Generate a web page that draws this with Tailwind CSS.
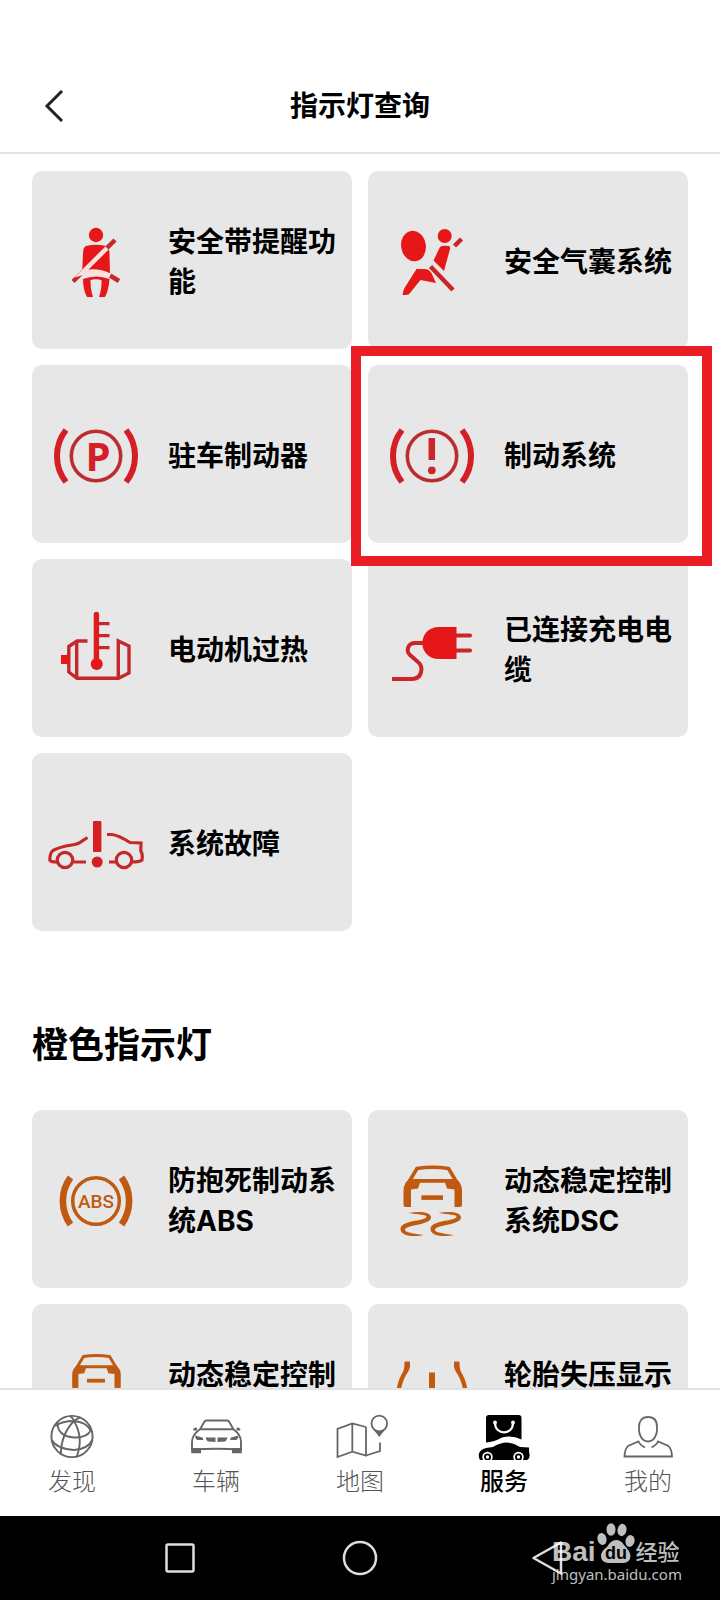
<!DOCTYPE html>
<html lang="zh-CN">
  <head>
    <meta charset="UTF-8" />
    <meta name="viewport" content="width=device-width, initial-scale=1" />
    <title>指示灯查询</title>
    <script src="https://cdn.jsdelivr.net/npm/@tailwindcss/browser@4"></script>
  </head>
  <body
    class="h-screen flex flex-col bg-white text-black font-['Inter','Noto_Sans_CJK_SC',sans-serif]"
  >
    <header class="shrink-0 pt-[60px] border-b-2 border-[#e4e4e4]">
      <div class="relative h-[92px] flex items-center justify-center">
        <button type="button" aria-label="返回" class="absolute left-8 p-2">
          <svg class="w-8 h-8" viewBox="0 0 32 32" fill="none" stroke="#222" stroke-width="3">
            <path d="M22 1 7 16l15 15" />
          </svg>
        </button>
        <h1 class="text-[28px] leading-10 font-bold">指示灯查询</h1>
      </div>
    </header>

    <main class="flex-1 min-h-0 overflow-hidden px-8 pt-[17px]">
      <!-- Red warning lights -->
      <section class="grid grid-cols-2 gap-4 text-[#e61718]">
        <button type="button" class="h-[178px] bg-[#e7e7e7] rounded-[10px] px-4 flex items-center gap-6 text-left">
          <svg class="w-24 h-24 shrink-0" viewBox="0 0 96 96" fill="none" stroke="currentColor">
            <g fill="currentColor" stroke="none">
              <circle cx="48" cy="23" r="7.2" />
              <path d="M38 34Q48 31.500 58 34Q61.500 35 61.500 42L62 62Q48 55 34 62L35 42Q35 35 38 34Z" />
              <path d="M35 67Q48 62 61.500 67Q60.500 79 57 85H51Q54 76 53.500 68Q48 66.500 42.500 68Q42.500 78 45 85H39Q35 78 35 67Z" />
            </g>
            <path d="M67 28 25 69.500M71 69 62 63.500" stroke="#c5292b" stroke-width="4.500" />
            <path d="M59 36 34 61Q48 57 62 63.500" stroke="#fce0dd" stroke-width="4.500" />
          </svg>
          <span class="pt-1 text-[28px] leading-10 font-bold text-black">安全带提醒功能</span>
        </button>

        <button type="button" class="h-[178px] bg-[#e7e7e7] rounded-[10px] px-4 flex items-center gap-6 text-left">
          <svg class="w-24 h-24 shrink-0" viewBox="0 0 96 96" fill="currentColor">
            <ellipse cx="29.500" cy="34" rx="12.300" ry="15.300" transform="rotate(-10 29.500 34)" />
            <circle cx="60.700" cy="24" r="7" />
            <path d="M56 35Q58 33 65 34Q66.500 34.500 66 37L60 59 49.500 48.500Z" />
            <path d="M32.500 57H40Q45 57 47 60L52 71 36.500 68 26 81Q25 83 22 83H18.500Q19 79 20.500 76Z" />
            <path d="M46 54 69.500 78.500" fill="none" stroke="#e7e7e7" stroke-width="7.500" />
            <path d="M77.500 27 70.500 34M46.500 54.500 69 78" fill="none" stroke="#cb2427" stroke-width="4.500" />
          </svg>
          <span class="pt-1 text-[28px] leading-10 font-bold text-black">安全气囊系统</span>
        </button>

        <button type="button" class="h-[178px] bg-[#e7e7e7] rounded-[10px] px-4 flex items-center gap-6 text-left">
          <svg class="w-24 h-24 shrink-0" viewBox="0 0 96 96" fill="none">
            <circle cx="48" cy="50" r="24.700" stroke="#bd2c2f" stroke-width="3.600" />
            <path d="M18 24A42 42 0 0 0 18 76M78 24A42 42 0 0 1 78 76" stroke="#d42024" stroke-width="6" />
            <text x="50" y="65" text-anchor="middle" fill="#d42024" class="font-['Open_Sans','Noto_Sans',sans-serif] text-[40px] font-bold">P</text>
          </svg>
          <span class="pt-1 text-[28px] leading-10 font-bold text-black">驻车制动器</span>
        </button>

        <div class="relative flex">
          <button type="button" class="flex-1 h-[178px] bg-[#e7e7e7] rounded-[10px] px-4 flex items-center gap-6 text-left">
            <svg class="w-24 h-24 shrink-0" viewBox="0 0 96 96" fill="none">
              <circle cx="48" cy="50" r="24.700" stroke="#bd2c2f" stroke-width="3.600" />
              <path d="M18 24A42 42 0 0 0 18 76M78 24A42 42 0 0 1 78 76" stroke="#d42024" stroke-width="6" />
              <path d="M47.800 32V54" stroke="#c9272a" stroke-width="6.500" />
              <circle cx="47.800" cy="64.300" r="3.900" fill="#c9272a" />
            </svg>
            <span class="pt-1 text-[28px] leading-10 font-bold text-black">制动系统</span>
          </button>
          <!-- Highlight frame around this card -->
          <div class="absolute z-10 -left-[17px] -right-6 -top-[19px] -bottom-[23px] border-10 border-[#ea1c24] pointer-events-none"></div>
        </div>

        <button type="button" class="h-[178px] bg-[#e7e7e7] rounded-[10px] px-4 flex items-center gap-6 text-left">
          <svg class="w-24 h-24 shrink-0" viewBox="0 0 96 96" fill="none" stroke="#c5282b" stroke-width="3.400">
            <path d="M39.500 41H29L20.800 46.500V72L29 78.300H70.500L81 73V46L70.300 41V78M28.700 42V78" />
            <path d="M48 23.700H61.500M48 35.700H61.500M48 47.700H61.500" stroke-width="3.200" />
            <path d="M48.400 14.500V62" stroke="#de1b1e" stroke-width="5.400" stroke-linecap="round" />
            <circle cx="48.700" cy="64" r="6" fill="#e61718" stroke="none" />
            <path d="M13 55H21V64H13Z" fill="#e61718" stroke="none" />
          </svg>
          <span class="pt-1 text-[28px] leading-10 font-bold text-black">电动机过热</span>
        </button>

        <button type="button" class="h-[178px] bg-[#e7e7e7] rounded-[10px] px-4 flex items-center gap-6 text-left">
          <svg class="w-24 h-24 shrink-0" viewBox="0 0 96 96" fill="none" stroke="#cb2528" stroke-width="4">
            <path d="M72.500 27V59H55C44 59 38.300 51 38.300 43S44 27 55 27Z" fill="#e61718" stroke="none" />
            <path d="M72 35.600H86M72 50.600H86" stroke-linecap="round" />
            <path d="M39 43H31C24 43 21.500 51 26 55L34 62C40 67 38 79 28 79H8" />
          </svg>
          <span class="pt-1 text-[28px] leading-10 font-bold text-black">已连接充电电缆</span>
        </button>

        <button type="button" class="h-[178px] bg-[#e7e7e7] rounded-[10px] px-4 flex items-center gap-6 text-left">
          <svg class="w-24 h-24 shrink-0" viewBox="0 0 96 96" fill="none" stroke="#c5282b" stroke-width="3.200">
            <path d="M39.500 43.500 31 49Q28 50.500 24 51 11 53 5 56.500 1.800 59 1.800 66 2 68 9 68M26 68H38M61 68H67.500" />
            <path d="M59 40.500H64Q71 41.500 82 48.500L93 49 92.800 57Q95 60 94 66 92 68 84 68" />
            <circle cx="17" cy="66" r="7.700" />
            <circle cx="76" cy="66" r="7.700" />
            <rect x="45" y="27" width="8.400" height="31" rx="1" fill="#d61f22" stroke="none" />
            <circle cx="49.200" cy="68" r="5.500" fill="#d61f22" stroke="none" />
          </svg>
          <span class="pt-1 text-[28px] leading-10 font-bold text-black">系统故障</span>
        </button>
      </section>

      <!-- Orange warning lights -->
      <h2 class="mt-[90px] mb-[41px] text-4xl leading-12 font-bold">橙色指示灯</h2>
      <section class="grid grid-cols-2 gap-4 text-[#c05a10]">
        <button type="button" class="h-[178px] bg-[#e7e7e7] rounded-[10px] px-4 flex items-center gap-6 text-left">
          <svg class="w-24 h-24 shrink-0" viewBox="0 0 96 96" fill="none" stroke="currentColor">
            <circle cx="48" cy="50" r="23.300" stroke-width="3.500" />
            <path d="M22.500 26.500A40 40 0 0 0 22.500 73.500M73.500 26.500A40 40 0 0 1 73.500 73.500" stroke-width="6.600" />
            <text x="48" y="57" text-anchor="middle" fill="currentColor" stroke="none" class="font-['Roboto',sans-serif] text-[19px] font-medium">ABS</text>
          </svg>
          <span class="pt-1 text-[28px] leading-10 font-bold text-black">防抱死制动系统ABS</span>
        </button>

        <button type="button" class="h-[178px] bg-[#e7e7e7] rounded-[10px] px-4 flex items-center gap-6 text-left">
          <svg class="w-24 h-24 shrink-0" viewBox="0 0 96 96" fill="currentColor">
            <g id="dsc">
              <path d="M25.500 30 33 17.500Q48.500 15 64.500 17.500L72 30" fill="none" stroke="currentColor" stroke-width="3.600" />
              <path d="M25 28H72.500Q78 33 78 39V54Q78 56 76 56H70.500V38.500L63 37.500 61 31.700H36L34 37.500 27 38.500V56H21.500Q19.500 56 19.500 54V39Q19.500 33 25 28Z" />
              <path d="M37.300 44.300H59V48.900H37.300Z" />
              <path id="skid" d="M24.500 62C34 60 47 60.500 47 66.500C47 74 23 73.500 21 78.500C20 81.500 30 82.500 39.500 84C31 86 16.500 85.500 16.500 78C16.700 69 40 70.500 42.500 66C43.500 63.500 34 63.500 24.500 62Z" />
              <use href="#skid" x="30" />
            </g>
          </svg>
          <span class="pt-1 text-[28px] leading-10 font-bold text-black">动态稳定控制系统DSC</span>
        </button>

        <button type="button" class="h-[178px] bg-[#e7e7e7] rounded-[10px] px-4 flex items-center gap-6 text-left">
          <svg class="w-24 h-24 shrink-0" viewBox="0 0 96 96" fill="currentColor">
            <use href="#dsc" transform="translate(8 -3) scale(.83)" />
          </svg>
          <span class="pt-1 text-[28px] leading-10 font-bold text-black">动态稳定控制系统DSC</span>
        </button>

        <button type="button" class="h-[178px] bg-[#e7e7e7] rounded-[10px] px-4 flex items-center gap-6 text-left">
          <svg class="w-24 h-24 shrink-0" viewBox="0 0 96 96" fill="currentColor">
            <path d="M20.500 16.500H26V22.500Q25 26 22 30 18.500 36 17 44L16 54H12L13 42Q15 33 19 27 20.500 24 20.500 16.500ZM75.500 16.500H70V22.500Q71 26 74 30 77.500 36 79 44L80 54H84L83 42Q81 33 77 27 75.500 24 75.500 16.500Z" />
            <path d="M45 27.500H51V56H45Z" />
          </svg>
          <span class="pt-1 text-[28px] leading-10 font-bold text-black">轮胎失压显示系统</span>
        </button>
      </section>
    </main>

    <nav class="shrink-0 h-32 border-t-2 border-[#e2e2e2] bg-white grid grid-cols-5 text-2xl leading-8 font-light text-[#555]">
      <a href="#" class="pt-5 flex flex-col items-center">
        <svg class="w-14 h-14" viewBox="0 0 56 56" fill="none" stroke="#666" stroke-width="1.900">
          <circle cx="28" cy="26.500" r="20.600" />
          <path d="M30 11Q17 24 16.800 45M30 11Q40 28 32.700 46.500M30 11Q29 8 26 6M30 11Q34 8 36 7.500" />
          <path d="M14 12.500C11 31 44 31 46.500 20Q42 12 30 11 18 11 11 16M7.700 30Q13 39 30 40 44 39 48.300 30" />
        </svg>
        <span>发现</span>
      </a>
      <a href="#" class="pt-5 flex flex-col items-center">
        <svg class="w-14 h-14 text-[#666]" viewBox="0 0 56 56" fill="none" stroke="currentColor" stroke-width="1.900">
          <path d="M12 19.300 16.500 11.500Q17.500 10.500 19 10.500H38.500Q40 10.500 41 11.500L45.500 19.300ZM12 19.300Q4 25 4 32V39.500Q28.500 38 53 39.500V32Q53 25 45.500 19.300" />
          <g fill="currentColor" stroke="none">
            <path d="M3.200 38H13V43.300H3.200ZM44 38H53.800V43.300H44ZM5 19Q7 16.500 9 18V20.500H5.500ZM52.500 19Q50.500 16.500 48.500 18V20.500H52Z" />
            <path d="M7 25.500 14.500 27.500 15.500 30H9Q7 29 7 25.500ZM50.500 25.500 43 27.500 42 30H48.500Q50.500 29 50.500 25.500ZM17.500 27.500H27.500V32L20 31.500Q18 30 17.500 27.500ZM39.500 27.500H29.500V32L37 31.500Q39 30 39.500 27.500Z" />
          </g>
        </svg>
        <span>车辆</span>
      </a>
      <a href="#" class="pt-5 flex flex-col items-center">
        <svg class="w-14 h-14 text-[#666]" viewBox="0 0 56 56" fill="none" stroke="currentColor" stroke-width="1.800">
          <path d="M34 17 20.300 13.500 5.500 19V47L20.300 41.700 34 45.500V17M20.300 13.500V41.700M34 45.500 48 41V32.500" />
          <circle cx="47.300" cy="13.500" r="7.800" />
          <path d="M41 19Q47.500 23 53.500 19L47.300 27Z" fill="currentColor" stroke="none" />
        </svg>
        <span>地图</span>
      </a>
      <a href="#" aria-current="page" class="pt-5 flex flex-col items-center font-medium text-black">
        <svg class="w-14 h-14" viewBox="0 0 56 56" fill="none">
          <path d="M13 5H42.500Q45.500 5 45.500 8V29.500Q36 24.500 26 27.500 18 32 10 32.500V8Q10 5 13 5Z" fill="currentColor" />
          <path d="M19 13C19 25.500 37 25.500 37 13" stroke="white" stroke-width="2.200" />
          <circle cx="19" cy="12.500" r="1.900" fill="white" />
          <circle cx="37" cy="12.500" r="1.900" fill="white" />
          <path d="M4 50Q2.200 47 3 43.500 4 39.500 10 38L17 37Q24 32.500 31 32.500 38 33 44 37L53 37.500V42Q54.500 46 52.500 49L51 50Z" fill="currentColor" />
          <circle cx="11.500" cy="47" r="4.400" stroke="white" stroke-width="1.700" />
          <circle cx="42.500" cy="47" r="4.400" stroke="white" stroke-width="1.700" />
          <circle cx="11.500" cy="47" r="1.700" fill="white" />
          <circle cx="42.500" cy="47" r="1.700" fill="white" />
        </svg>
        <span>服务</span>
      </a>
      <a href="#" class="pt-5 flex flex-col items-center">
        <svg class="w-14 h-14 text-[#666]" viewBox="0 0 56 56" fill="none" stroke="currentColor" stroke-width="1.800">
          <path d="M28 7C34 7 37 11 37 17V21Q36 27 32.500 30 28 33 23.500 30 20 27 19 21V17C19 11 22 7 28 7Z" />
          <path d="M25 37.500Q20 35 18.500 31.500L8 36Q4.500 40 4.500 46.500H52Q52 40 48.500 36L38 31.500Q36.500 35 31.500 37.500" />
        </svg>
        <span>我的</span>
      </a>
    </nav>

    <!-- System buttons -->
    <footer class="relative shrink-0 h-[84px] bg-black flex items-center justify-center gap-33 text-[#dedede]">
      <button type="button" aria-label="最近任务">
        <svg class="w-12 h-12" viewBox="0 0 48 48" fill="none" stroke="currentColor" stroke-width="2.500">
          <rect x="10.500" y="10.500" width="27" height="27" rx="1.500" />
        </svg>
      </button>
      <button type="button" aria-label="主页">
        <svg class="w-12 h-12" viewBox="0 0 48 48" fill="none" stroke="currentColor" stroke-width="2.500">
          <circle cx="24" cy="24" r="16" />
        </svg>
      </button>
      <button type="button" aria-label="返回上一页">
        <svg class="w-12 h-12" viewBox="0 0 48 48" fill="none" stroke="currentColor" stroke-width="2.500" stroke-linejoin="round">
          <path d="M17.500 24 45 8.500V39.500Z" />
        </svg>
      </button>

      <!-- Watermark -->
      <div class="absolute right-10 top-1 w-32 text-white/75 pointer-events-none">
        <div class="flex items-end h-11">
          <span class="font-['Liberation_Sans'] font-bold text-[28px] leading-6">Bai</span>
          <svg class="w-10 h-11 shrink-0" viewBox="0 0 40 44" fill="currentColor">
            <ellipse cx="6" cy="19" rx="4.500" ry="6" transform="rotate(-15 6 19)" />
            <ellipse cx="15" cy="9.500" rx="4.500" ry="6.200" />
            <ellipse cx="26" cy="10" rx="4.500" ry="6.200" transform="rotate(10 26 10)" />
            <ellipse cx="34" cy="21" rx="4.500" ry="6" transform="rotate(12 34 21)" />
            <path d="M20 20Q25 20 28 25 34 31 34.500 36 34 43 27 43H12Q5 42 5 36 5 31 11 27 15 20 20 20Z" />
            <text x="20" y="39" text-anchor="middle" fill="black" class="font-['Liberation_Sans'] text-[18px] font-bold">du</text>
          </svg>
          <span class="font-medium text-[22px] leading-6 whitespace-nowrap">经验</span>
        </div>
        <div class="font-['Noto_Sans'] text-[15px] leading-5 whitespace-nowrap">jingyan.baidu.com</div>
      </div>
    </footer>
  </body>
</html>
